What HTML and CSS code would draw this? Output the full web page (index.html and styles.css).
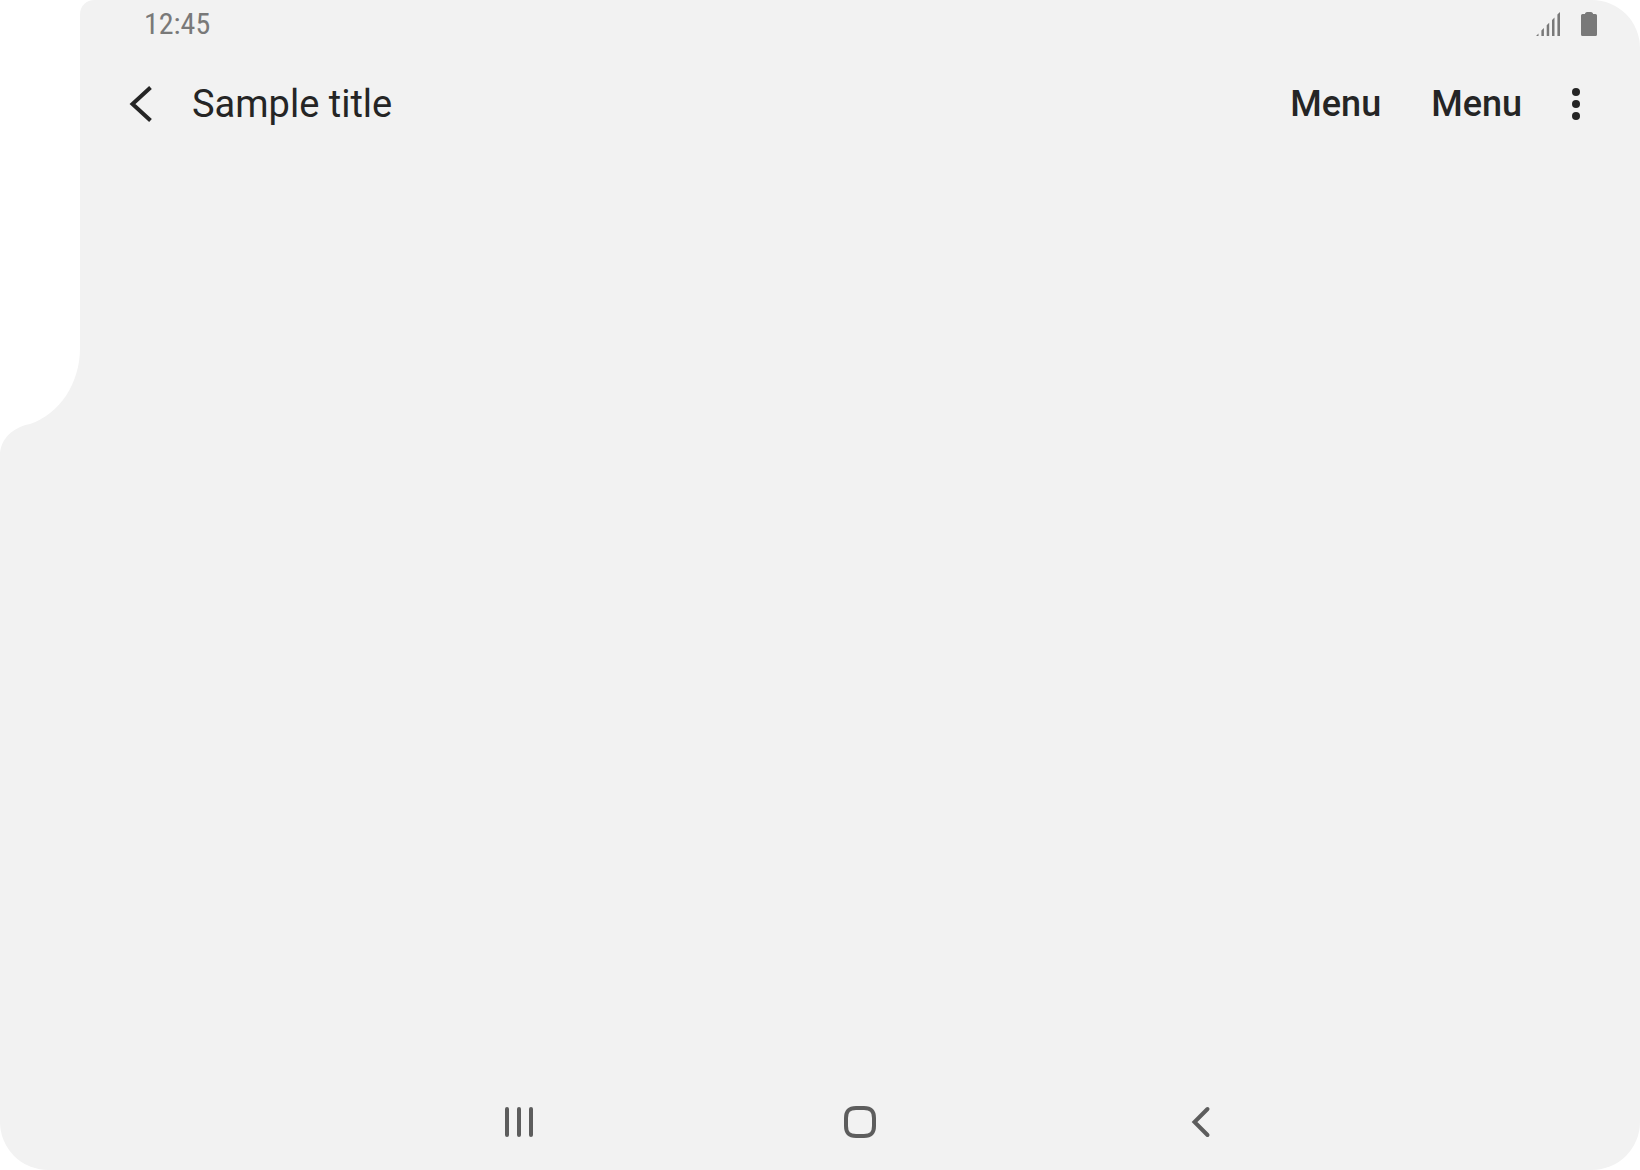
FILE: index.html
```html
<!DOCTYPE html>
<html lang="en">
<head>
<meta charset="utf-8">
<meta name="viewport" content="width=device-width, initial-scale=1">
<title>Sample title</title>
<link rel="stylesheet" href="styles.css">
</head>
<body>
<div class="screen">
  <svg class="cutout" width="95" height="456" viewBox="0 0 95 456" aria-hidden="true"><path d="M0 0H95C86 0 80 6 80 15V348C80 383 60 414 30 424C11 428 0 440 0 456Z"/></svg>
  <header>
    <div class="status">
      <time class="clock">12:45</time>
      <div class="indicators">
        <svg width="24" height="24" viewBox="0 0 24 24" role="img" aria-label="Signal"><path d="M0 24L2.500 21.500V24ZM5.400 24V18.600L7.900 16.100V24ZM10.700 24V13.300L13.200 10.800V24ZM16 24V8L18.500 5.500V24ZM21.400 24V2.600L24 0V24Z"/></svg>
        <svg width="16" height="24" viewBox="0 0 16 24" role="img" aria-label="Battery"><path d="M4 2V1.500Q4.500 0 6 0H10Q11.500 0 12 1.500V2H14.500Q16 2 16 3.500V22.500Q16 24 14.500 24H1.500Q0 24 0 22.500V3.500Q0 2 1.500 2Z"/></svg>
      </div>
    </div>
    <div class="app-bar">
      <button class="icon-button" type="button" aria-label="Navigate up"><svg width="24" height="36" viewBox="0 0 24 36"><path class="up" d="M22.500 1.500L4.500 18L22.500 34.500"/></svg></button>
      <h1 class="title">Sample title</h1>
      <div class="actions">
        <button class="action" type="button">Menu</button>
        <button class="action" type="button">Menu</button>
        <button class="icon-button more" type="button" aria-label="More options"><svg width="8" height="32" viewBox="0 0 8 32"><circle cx="4" cy="4" r="4"/><circle cx="4" cy="16" r="4"/><circle cx="4" cy="28" r="4"/></svg></button>
      </div>
    </div>
  </header>
  <main class="content"></main>
  <nav class="nav-bar" aria-label="System navigation">
    <div class="nav-keys">
      <button class="nav-key" type="button" aria-label="Recents"><svg width="32" height="32" viewBox="0 0 32 32"><path d="M4 3V29M16 3V29M28 3V29"/></svg></button>
      <button class="nav-key" type="button" aria-label="Home"><svg width="32" height="32" viewBox="0 0 32 32"><path d="M12 2H20C27 2 30 5 30 12V20C30 27 27 30 20 30H12C5 30 2 27 2 20V12C2 5 5 2 12 2Z"/></svg></button>
      <button class="nav-key" type="button" aria-label="Back"><svg width="32" height="32" viewBox="0 0 32 32"><path d="M22.500 3L9.500 16L22.500 29"/></svg></button>
    </div>
  </nav>
</div>
</body>
</html>
```
FILE: styles.css
```css
* {
  box-sizing: border-box;
}

body {
  margin: 0;
  background: #fff;
  color: #252525;
  font-family: Roboto, "Liberation Sans", sans-serif;
}

svg {
  display: block;
}

button {
  display: flex;
  align-items: center;
  justify-content: center;
  padding: 0;
  border: 0;
  background: none;
  color: inherit;
  font: inherit;
}

.screen {
  position: relative;
  display: flex;
  flex-direction: column;
  min-height: 100vh;
  padding-left: 80px;
  overflow: hidden;
  border-radius: 0 48px 48px 48px;
  background: #f2f2f2;
}

.cutout {
  position: absolute;
  top: 0;
  left: 0;
  fill: #fff;
}

.status {
  display: flex;
  align-items: center;
  justify-content: space-between;
  height: 48px;
  padding: 0 43px 0 64px;
  color: #797979;
}

.clock {
  font-family: "Roboto Condensed", Roboto, sans-serif;
  font-size: 30px;
  line-height: 48px;
}

.indicators {
  display: flex;
  gap: 21px;
  fill: currentColor;
}

.app-bar {
  display: flex;
  align-items: center;
  gap: 28px;
  height: 112px;
  padding: 0 40px 0 36px;
}

.icon-button {
  width: 48px;
  height: 48px;
  fill: currentColor;
}

.up {
  fill: none;
  stroke: currentColor;
  stroke-width: 4;
}

.title {
  margin: 0;
  font-size: 38px;
  font-weight: 400;
  line-height: 48px;
}

.actions {
  display: flex;
  align-items: center;
  gap: 50px;
  margin-left: auto;
}

.action {
  font-size: 36px;
  font-weight: 500;
  line-height: 48px;
}

.more {
  margin-left: -20px;
}

.content {
  flex: 1;
}

.nav-bar {
  display: flex;
  justify-content: center;
  height: 96px;
}

.nav-keys {
  display: grid;
  grid-template-columns: repeat(3, 1fr);
  width: 100%;
  max-width: 1024px;
}

.nav-key {
  color: #5d5d5d;
}

.nav-key path {
  fill: none;
  stroke: currentColor;
  stroke-width: 4;
  stroke-linecap: round;
}
```
